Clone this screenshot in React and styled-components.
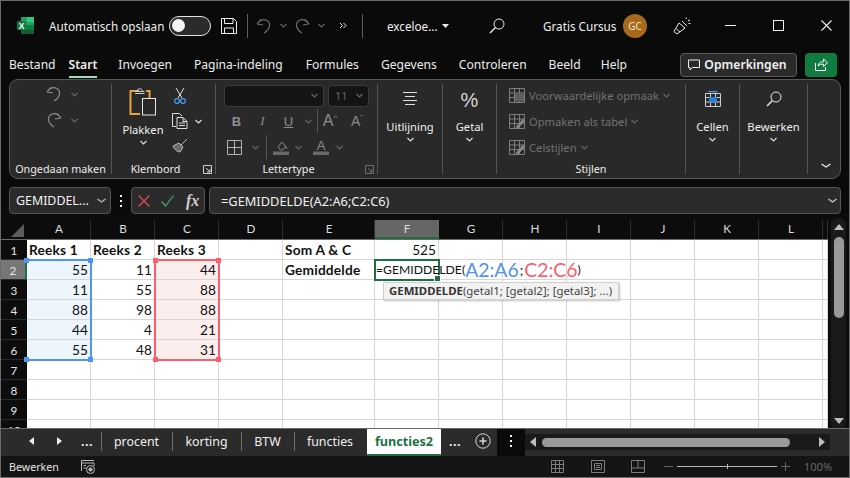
import React from "react";
import styled, { createGlobalStyle } from "styled-components";

const Global = createGlobalStyle`
  html, body { margin: 0; padding: 0; background: #0a0a0a; }
  * { box-sizing: border-box; }
`;
const UI = `"Noto Sans", "Open Sans", sans-serif`;
const CALC = `Lato, "Liberation Sans", sans-serif`;

const Window = styled.div`
  width: 850px; height: 478px; overflow: hidden; background: #0a0a0a;
  border: 1px solid #6b6b6b; display: flex; flex-direction: column;
  font-family: ${UI}; color: #ececec;
`;
const TitleBar = styled.header`display: flex; align-items: center; height: 49px; flex: none;`;
const Slot = styled.div`
  flex: none; width: ${p => p.$w}px; display: flex; align-items: center; justify-content: center;
`;
const TitleText = styled.span`
  flex: none; width: ${p => p.$w}px; font-size: 11.7px; white-space: nowrap; color: #f0f0f0;
`;
const Toggle = styled.div`
  flex: none; width: 42px; height: 20px; border: 1.5px solid #e4e4e4; border-radius: 10px; background: #2b2b2b;
  padding: 2px; display: flex;
`;
const Knob = styled.i`width: 13px; height: 13px; border-radius: 50%; background: #f4f4f4;`;
const TitleSep = styled.i`flex: none; width: 1px; height: 24px; background: #5e5e5e;`;
const Avatar = styled.div`
  flex: none; width: 24px; height: 24px; border-radius: 50%; background: #a76a1b; color: #f1e3cf; font-size: 10px;
  display: flex; align-items: center; justify-content: center;
`;

const TabBar = styled.nav`display: flex; align-items: center; height: 29px; flex: none; padding: 0 12px 0 8px;`;
const Tab = styled.span`
  position: relative; font-size: 12.1px; margin-right: ${p => p.$mr}px; white-space: nowrap; color: #ededed;
  font-weight: ${p => (p.$on ? 600 : 400)};
  ${p => p.$on && `&::after{content:"";position:absolute;left:0;right:0;bottom:-5px;height:2px;background:#a3dcbd;}`}
`;
const TabSpacer = styled.div`flex: 1;`;
const CommentBtn = styled.button`
  width: 117px; height: 24px; border: 1px solid #5d5d5d; border-radius: 4px; background: #2a2a2a; color: #f2f2f2;
  font: 600 12.2px ${UI}; display: flex; align-items: center; justify-content: center; gap: 4px; padding: 0 2px 0 0;
`;
const ShareBtn = styled.button`
  width: 32px; height: 24px; margin-left: 8px; border: none; border-radius: 4px; background: #107c41;
  display: flex; align-items: center; justify-content: center; padding: 0;
`;

const Ribbon = styled.section`
  flex: none; margin: 0 8px; height: 100px; background: #292929; border: 1px solid #585858; border-radius: 9px;
  display: flex; padding: 4px 0; position: relative;
`;
const Group = styled.div`
  flex: none; width: ${p => p.$w}px; border-right: ${p => (p.$last ? "none" : "1px solid #555")};
  display: flex; flex-direction: column; position: relative;
`;
const GroupBody = styled.div`flex: 1; min-height: 0; display: flex; position: relative;`;
const GroupLabel = styled.div`
  height: 15px; flex: none; text-align: center; font-size: 10.8px; line-height: 15px; color: #ececec; white-space: nowrap;
  padding-right: ${p => p.$pr || 0}px; margin-bottom: -2px;
`;
const Launcher = styled.span`position: absolute; right: 3px; bottom: 0; display: flex;`;
const Col = styled.div`
  flex: none; width: ${p => p.$w}px; display: flex; flex-direction: column; align-items: center;
  padding-top: ${p => p.$pt || 0}px;
`;
const BigLabel = styled.div`font-size: 11.2px; line-height: 14px; color: #efefef; white-space: nowrap; margin: ${p => p.$mt || 0}px 0 3px;`;
const SmallRow = styled.div`
  flex: none; display: flex; align-items: center; height: ${p => p.$h || 26}px; padding-left: ${p => p.$pl || 0}px;
  margin-top: ${p => p.$mt || 0}px;
`;
const IconCell = styled.span`flex: none; width: ${p => p.$w}px; display: flex; align-items: center; justify-content: center;`;
const Stack = styled.div`display: flex; flex-direction: column; margin-top: ${p => p.$mt || 0}px;`;
const FontBox = styled.div`
  flex: none; width: ${p => p.$w}px; height: 22px; background: #141414; border: 1px solid #3c3c3c; border-radius: 4px; margin-right: 4px;
  display: flex; align-items: center; justify-content: space-between; padding: 0 5px 0 6px; font-size: 11px; color: #666;
`;
const VRule = styled.i`flex: none; width: 1px; height: 24px; background: #555; margin-left: ${p => p.$ml || 0}px;`;
const Glyph = styled.span`
  font: ${p => p.$f || "700 13px 'Liberation Sans', sans-serif"}; color: ${p => p.$c || "#8e8e8e"};
  text-decoration: ${p => (p.$u ? "underline" : "none")};
`;
const TinyMark = styled.sup`font-size: 8px;`;
const StyleRow = styled.div`
  flex: none; display: flex; align-items: center; height: 26px; padding-left: 12px; gap: 4px;
  font-size: 11.2px; color: #727272; white-space: nowrap;
`;
const CollapseBtn = styled.span`position: absolute; right: 9px; bottom: 10px; display: flex;`;

const FormulaRow = styled.div`display: flex; align-items: stretch; flex: none; height: 27px; margin: 8px 8px 0; `;
const NameBox = styled.div`
  width: 102px; background: #2b2b2b; border: 1px solid #555; border-radius: 4px; flex: none;
  display: flex; align-items: center; justify-content: space-between; padding: 0 4px 0 6px; font-size: 12.4px; color: #f2f2f2; white-space: nowrap;
`;
const Dots = styled.div`flex: none; width: 20px; display: flex; align-items: center; justify-content: center;`;
const FormulaBtns = styled.div`
  flex: none; width: 74px; background: #2b2b2b; border: 1px solid #555; border-radius: 4px; display: flex; align-items: center;
  padding-left: 6px; gap: 11px;
`;
const Fx = styled.span`font: italic 700 16px "Liberation Serif", serif; color: #cfcfcf; margin-left: 1px;`;
const FormulaInput = styled.div`
  flex: 1; margin-left: 4px; background: #2b2b2b; border: 1px solid #555; border-radius: 4px; display: flex; align-items: center;
  justify-content: space-between; padding: 0 3px 0 11px; font-size: 12.8px; color: #f2f2f2;
`;

const SheetWrap = styled.div`flex: none; height: 214px; display: flex; overflow: hidden;`;
const Grid = styled.div`
  flex: none; width: 827px; display: grid; overflow: hidden; background: #fff;
  grid-template-columns: 26px repeat(4, 64px) 92px repeat(7, 64px) 5px;
  grid-template-rows: 26px repeat(10, 20px);
  font-family: ${CALC}; font-size: 13.7px; color: #111;
`;
const Place = styled.div`grid-column: ${p => p.$c}; grid-row: ${p => p.$r};`;
const Corner = styled(Place)`background: #0c0c0c; position: relative; border-bottom: 1px solid #6a6a6a;
  &::after { content: ""; position: absolute; right: 3px; bottom: 2px; border-style: solid; border-width: 0 0 13px 13px; border-color: transparent transparent #5c5c5c transparent; }`;
const ColHead = styled(Place)`
  background: #0c0c0c; border-bottom: 1px solid #6a6a6a; font: 11.7px ${CALC}; color: #dcdcdc; position: relative;
  display: flex; align-items: flex-end; justify-content: center; padding-bottom: 4px;
  &::before { content: ""; position: absolute; left: 0; right: 0; bottom: 0; top: 6px;
    background: ${p => (p.$on ? "#666" : "transparent")};
    border-right: 1px solid ${p => (p.$on ? "#666" : "#2e2e2e")};
    border-bottom: ${p => (p.$on ? "2px solid #1d6f42" : "none")}; }
  & > span { position: relative; }
`;
const RowHead = styled(Place)`
  background: ${p => (p.$on ? "#777" : "#0c0c0c")}; color: #e6e6e6; font: 11.7px ${CALC};
  border-bottom: 1px solid #2a2a2a; border-right: ${p => (p.$on ? "2px solid #1d6f42" : "none")};
  display: flex; align-items: center; justify-content: center;
`;
const Cell = styled(Place)`
  background: ${p => p.$fill || "#fff"}; border-right: 1px solid #d6d6d6; border-bottom: 1px solid #d6d6d6;
  padding: 0 2px; line-height: 20px; white-space: nowrap;
  text-align: ${p => (p.$num ? "right" : "left")}; font-weight: ${p => (p.$b ? 700 : 400)};
  letter-spacing: ${p => (p.$b ? ".2px" : "0")};
`;
const RangeBox = styled(Place)`
  position: relative; z-index: 2; margin: -1px -1px -1px ${p => (p.$flush ? 0 : -1)}px; pointer-events: none;
  border: 2px solid ${p => p.$color}; ${p => p.$flush && "border-left: none;"}
`;
const Handle = styled.i`
  position: absolute; width: 5px; height: 5px; background: ${p => p.$color};
  ${p => (p.$top ? "top: -3px;" : "bottom: -3px;")}
  ${p => (p.$left ? "left: -3px;" : "right: -3px;")}
`;
const ActiveCell = styled(Place)`
  position: relative; z-index: 3; margin: -1px -1px -1px -1px; border: 2px solid #1d6f42; background: #fff;
  white-space: nowrap; display: flex; align-items: center; padding-left: 0; font-size: 12.2px; line-height: 18px; color: #111;
`;
const CornerDot = styled.i`position: absolute; right: -3px; bottom: -3px; width: 5px; height: 5px; background: #1d6f42; border: 1px solid #fff; box-sizing: content-box;`;
const RefPart = styled.span`font-size: 19.4px; color: ${p => p.$c};`;
const RefSep = styled.span`font-size: 13.6px; margin: 0 1px;`;
const Hint = styled.div`
  position: absolute; left: 7px; top: 21px; width: 236px; height: 18px; background: #f2f2f2; border: 1px solid #cfcfcf;
  box-shadow: 1px 1px 2px rgba(0,0,0,.25); font: 11.4px/16px ${UI}; color: #444; padding-left: 5px; white-space: nowrap;
  & b { color: #333; font-weight: 700; }
`;
const VScroll = styled.aside`flex: 1; background: #0c0c0c; display: flex; flex-direction: column; align-items: center; padding-top: 10px; position: relative;`;
const VTrack = styled.div`
  position: absolute; left: 3px; right: 3px; top: 4px; bottom: -2px; background: #1a1a1a; border-radius: 8px;
  display: flex; flex-direction: column; align-items: center; padding-top: 6px;
`;
const VThumb = styled.div`width: 10px; height: 81px; background: #9a9a9a; border-radius: 5px; margin-top: 7px;`;
const VArrow = styled.i`
  width: 0; height: 0; border-left: 5px solid transparent; border-right: 5px solid transparent;
  ${p => (p.$down ? "border-top: 6px solid #bdbdbd; margin-top: auto; margin-bottom: 6px;" : "border-bottom: 6px solid #bdbdbd;")}
`;

const SheetBar = styled.div`
  flex: none; height: 28px; background: #2b2b2b; border-top: 1px solid #6a6a6a; display: flex; align-items: stretch;
  font-size: 12.4px; color: #efefef; padding-left: 22px;
`;
const NavCell = styled.div`
  flex: none; width: ${p => p.$w}px; padding: 0 ${p => p.$pr || 0}px 3px 0; display: flex; align-items: center; justify-content: center; font-weight: 700; letter-spacing: .5px;
`;
const SheetTab = styled.div`
  flex: none; width: ${p => p.$w}px; display: flex; align-items: center; justify-content: center; position: relative; padding-bottom: 3px;
  &::before { content: ""; position: absolute; left: 0; top: 3px; bottom: 5px; width: 1px; background: #6e6e6e; }
`;
const ActiveTab = styled.div`
  flex: none; width: 74px; margin-left: 1px; background: #fff; color: #1a7245; font-weight: 700; border-bottom: 2px solid #1d6f42;
  display: flex; align-items: center; justify-content: center; font-size: 12.6px; padding-bottom: 1px;
`;
const MoreCell = styled.div`flex: none; width: ${p => p.$w}px; padding-bottom: 3px; display: flex; align-items: center; justify-content: center; background: ${p => p.$bg || "transparent"};`;
const HScroll = styled.div`
  flex: none; width: 305px; background: #1a1a1a; margin: 5px 0 6px; display: flex; align-items: center; padding: 0 5px;
`;
const HThumb = styled.div`width: 248px; height: 9px; background: #9a9a9a; border-radius: 5px; margin: 0 auto 0 6px;`;
const HArrow = styled.i`
  width: 0; height: 0; border-top: 5px solid transparent; border-bottom: 5px solid transparent;
  ${p => (p.$right ? "border-left: 6px solid #bdbdbd;" : "border-right: 6px solid #bdbdbd;")}
`;
const StatusBar = styled.footer`flex: 1; background: #141414; display: flex; align-items: center; padding: 0 18px 0 8px; font-size: 10.7px; color: #e4e4e4;`;
const StatusText = styled.span`flex: none; width: 72px;`;
const StatusSpacer = styled.div`flex: 1;`;
const StatusGap = styled.i`flex: none; width: ${p => p.$w}px;`;
const Zoom = styled.div`flex: none; display: flex; align-items: center; width: 167px; color: #666; font-size: 11px; margin-left: 19px;`;
const ZoomBar = styled.div`flex: none; width: 100px; height: 1px; background: #b8b8b8; margin: 0 4px; position: relative;
  &::after { content: ""; position: absolute; left: 50%; top: -2px; width: 1px; height: 5px; background: #b8b8b8; }`;
const ZoomValue = styled.span`margin-left: 14px;`;

const Svg = ({ w = 16, h = 16, vb, children, c = "#e6e6e6", sw = 1 }) => (
  <svg width={w} height={h} viewBox={vb || `0 0 ${w} ${h}`} fill="none" stroke={c} strokeWidth={sw} style={{ display: "block", flex: "none" }}>{children}</svg>
);
const Chev = ({ c = "#dedede", w = 7 }) => (
  <Svg w={w} h={5} c={c} sw={1.2}><path d={`M0.5 1 L${w / 2} 4 L${w - 0.5} 1`} /></Svg>
);
const Undo = ({ c, flip, s = 18 }) => (
  <svg width={s} height={s} viewBox="0 0 18 18" fill="none" stroke={c} strokeWidth="1.2" style={{ transform: flip ? "scaleX(-1)" : "none", display: "block" }}>
    <path d="M2 7 L6 2.5 M2 7 L8 8 M2 7 C5 3 9 2 12 3.5 C16 6 15.5 12 9 16" />
  </svg>
);
const ExcelLogo = () => (
  <svg width="17" height="17" viewBox="0 0 17 17" style={{ display: "block" }}>
    <rect x="4" y="0" width="13" height="17" rx="1" fill="#21a366" />
    <rect x="4" y="8" width="13" height="5" fill="#107c41" />
    <rect x="10" y="0" width="7" height="5" fill="#33c481" />
    <rect x="4" y="13" width="13" height="4" fill="#185c37" />
    <rect x="0" y="4" width="9" height="9" rx="1" fill="#107c41" />
    <text x="4.5" y="11.5" fontSize="8.5" fontWeight="700" fontFamily="Liberation Sans, sans-serif" fill="#fff" textAnchor="middle">X</text>
  </svg>
);
const SaveIcon = () => (
  <Svg w={16} h={16} c="#eee">
    <path d="M.5.5H12.5L15.5 3.5V15.5H.5Z M3.5.5V5.5H12V.5 M3.5 15.5V10H12.5V15.5" />
  </Svg>
);
const SearchIcon = ({ c = "#e8e8e8" }) => (
  <Svg w={16} h={16} vb="0 0 16 16" c={c} sw={1}>
    <circle cx="10" cy="6" r="5" /><path d="M6.5 9.5 L1 15" strokeWidth="1.5" />
  </Svg>
);
const PenIcon = () => (
  <Svg w={18} h={18} c="#eee">
    <path d="M1 14.5 L6 6 L12 11 L4 17 Z M3.5 12 L7 15 M9 4 L14 9 M13 2 L13.5 .5 M15 4 L17 3 M15.5 6.5 L17.5 6.5" />
  </Svg>
);
const Clipboard = () => (
  <Svg w={28} h={31}>
    <path d="M10 4 H1.5 V27 H11" stroke="#e8a33d" strokeWidth="2" />
    <path d="M17 4 H20.5 V11" stroke="#e8a33d" strokeWidth="2" />
    <path d="M6 6.5 H15.5 M8 4 C8.5 1 13 1 13.5 4 M6 4.5 H15.5" stroke="#cfcfcf" />
    <rect x="13.5" y="11.5" width="13" height="16.5" stroke="#e6e6e6" />
  </Svg>
);
const Scissors = () => (
  <Svg w={12} h={18} c="#ddd">
    <path d="M2 1 L8 11 M10 1 L4 11" />
    <circle cx="3" cy="14" r="2.4" stroke="#4a9bf0" strokeWidth="1.2" /><circle cx="9" cy="14" r="2.4" stroke="#4a9bf0" strokeWidth="1.2" />
  </Svg>
);
const CopyIcon = () => (
  <Svg w={16} h={16} c="#ddd">
    <path d="M4 13.5H.5V.5H7.5L10 3 M5 15.5V4.5H11L15 8.5V15.5Z M11 4.5V8.5H15 M7 10H13 M7 12.5H13" />
  </Svg>
);
const BrushIcon = () => (
  <Svg w={16} h={16} c="#b8b8b8">
    <path d="M15 1 L9 7 M7 5 L11 9 L8 14 C5 14 2 11 1 8 Z" fill="#6a6a6a" />
  </Svg>
);
const Launch = ({ c = "#cfcfcf" }) => (
  <Svg w={9} h={9} c={c}><path d="M.5 8.5V.5H8.5V8.5H.5 M3 3 L7 7 M7 4V7H4" /></Svg>
);
const BorderIcon = () => (
  <Svg w={15} h={15} c="#b4b4b4"><path d="M.5.5H14.5V14.5H.5Z M7.5.5V14.5 M.5 7.5H14.5" /></Svg>
);
const FillIcon = () => (
  <Svg w={16} h={16} c="#8e8e8e"><path d="M5 8 L9 3 L13 8 L8 11.5 Z M13 8 L14 10" /><rect x="0" y="12.5" width="16" height="3.5" fill="#6a6a6a" stroke="none" /></Svg>
);
const ColorA = () => (
  <svg width="16" height="16" viewBox="0 0 16 16" style={{ display: "block" }}>
    <text x="8" y="11" textAnchor="middle" fontSize="13" fontFamily="Liberation Sans, sans-serif" fill="#8c8c8c">A</text>
    <rect x="0" y="12.5" width="16" height="3.5" fill="#6a6a6a" />
  </svg>
);
const AlignIcon = () => (
  <Svg w={16} h={14} c="#e0e0e0"><path d="M1 .5H15 M3 4.5H13 M1 8.5H15 M3 12.5H13" /></Svg>
);
const GridStyleIcon = ({ brush }) => (
  <Svg w={16} h={15} c="#7e7e7e">
    <path d="M.5.5H15.5V14.5H.5Z M.5 5H15.5 M.5 9.5H15.5 M5.5.5V14.5 M10.5.5V14.5" />
    {brush ? <path d="M7 13 L14 5 L15.5 7 L9 14Z" fill="#8a8a8a" /> : <rect x="6" y="5.5" width="9" height="8" fill="#5e5e5e" stroke="none" />}
  </Svg>
);
const CellsIcon = () => (
  <Svg w={16} h={16} c="#cfcfcf">
    <path d="M.5 2.5H15.5V15.5H.5Z M.5 6.5H15.5 M.5 11H15.5 M5.5 2.5V15.5 M10.5 2.5V15.5" />
    <rect x="4" y="6" width="8" height="5.5" fill="#2c7fd8" stroke="none" />
    <path d="M3.5 .5H12.5" stroke="#4a9bf0" strokeWidth="1.4" />
  </Svg>
);
const CommentIcon = () => (
  <Svg w={12} h={12} c="#eee"><path d="M.5 1H11.5V8.5H4.5L2 11V8.5H.5Z" /></Svg>
);
const ShareIcon = () => (
  <Svg w={13} h={13} c="#fff"><path d="M.5 5V12.5H10.5V9 M3 8 C3.5 5 6 3.5 8.5 3.5 V1 L12.5 4.8 L8.5 8.5 V6 C6.5 6 4.5 6.5 3 8Z" /></Svg>
);
const PlusCircle = () => (
  <Svg w={16} h={16} c="#d4d4d4"><circle cx="8" cy="8" r="7.2" /><path d="M4.5 8H11.5 M8 4.5V11.5" strokeWidth="1.6" /></Svg>
);
const VDots = () => (
  <Svg w={2} h={12} c="#f0f0f0" sw={2}><path d="M1 0V2 M1 5V7 M1 10V12" /></Svg>
);
const NormalView = () => (
  <Svg w={13} h={13} c="#7d7d7d"><path d="M.5.5H12.5V12.5H.5Z M4.5.5V12.5 M8.5.5V12.5 M.5 4.5H12.5 M.5 8.5H12.5" /></Svg>
);
const PageView = () => (
  <Svg w={14} h={13} c="#7d7d7d"><path d="M.5.5H13.5V12.5H.5Z M3.5 3.5H10.5V9.5H3.5Z M5 5.5H9 M5 7.5H9" /></Svg>
);
const BreakView = () => (
  <Svg w={14} h={13} c="#7d7d7d"><path d="M.5.5H13.5V12.5H.5Z M.5 8H13.5 M7 .5V8" /></Svg>
);
const MacroIcon = () => (
  <Svg w={14} h={14} c="#bdbdbd"><path d="M.5 11V.5H13 M.5 3H13V6 M2.5 5.5H5 M2.5 8H5" /><circle cx="9.5" cy="9.5" r="4" /><circle cx="9.5" cy="9.5" r="1.6" fill="#bdbdbd" /></Svg>
);

const colLetters = ["A", "B", "C", "D", "E", "F", "G", "H", "I", "J", "K", "L"];
const BLUE = "#4f94ef"; const RED = "#ff5d6c";
const data = { 1: ["Reeks 1", "Reeks 2", "Reeks 3"], 2: [55, 11, 44], 3: [11, 55, 88], 4: [88, 98, 88], 5: [44, 4, 21], 6: [55, 48, 31] };

function Sheet() {
  const cells = [];
  for (let r = 1; r <= 10; r++) {
    for (let c = 0; c < 13; c++) {
      if (r === 2 && c === 5) continue;
      let text = null, b = false, num = false, fill;
      if (data[r] && c < 3) { text = data[r][c]; b = r === 1; num = r > 1; }
      if (r > 1 && r < 7 && c === 0) fill = "#edf5fd";
      if (r > 1 && r < 7 && c === 2) fill = "#fdeeee";
      if (c === 4 && r === 1) { text = "Som A & C"; b = true; }
      if (c === 4 && r === 2) { text = "Gemiddelde"; b = true; }
      if (c === 5 && r === 1) { text = 525; num = true; }
      cells.push(<Cell key={`${r}-${c}`} $r={r + 1} $c={c + 2} $b={b} $num={num} $fill={fill}>{text}</Cell>);
    }
  }
  return (
    <Grid>
      <Corner $r={1} $c={1} />
      {colLetters.map((l, i) => <ColHead key={l} $r={1} $c={i + 2} $on={l === "F"}><span>{l}</span></ColHead>)}
      <ColHead $r={1} $c={14} />
      {Array.from({ length: 10 }, (_, i) => <RowHead key={i} $r={i + 2} $c={1} $on={i === 1}>{i + 1}</RowHead>)}
      {cells}
      <RangeBox $r="3 / span 5" $c={2} $color={BLUE} $flush>
        <Handle $color={BLUE} $top /><Handle $color={BLUE} />
        <Handle $color={BLUE} $top $left /><Handle $color={BLUE} $left />
      </RangeBox>
      <RangeBox $r="3 / span 5" $c={4} $color={RED}>
        <Handle $color={RED} $top /><Handle $color={RED} />
        <Handle $color={RED} $top $left /><Handle $color={RED} $left />
      </RangeBox>
      <ActiveCell $r={3} $c={7}>
        =GEMIDDELDE(<RefPart $c={BLUE}>A2:A6</RefPart><RefSep>;</RefSep><RefPart $c={RED}>C2:C6</RefPart>)
        <CornerDot />
        <Hint><b>GEMIDDELDE</b>(getal1; [getal2]; [getal3]; ...)</Hint>
      </ActiveCell>
    </Grid>
  );
}

export default function App() {
  return (
    <>
      <Global />
      <Window>
        <TitleBar>
          <Slot $w={48}><ExcelLogo /></Slot>
          <TitleText $w={120}>Automatisch opslaan</TitleText>
          <Toggle><Knob /></Toggle>
          <Slot $w={36}><SaveIcon /></Slot>
          <TitleSep />
          <Slot $w={32}><Undo c="#6d6d6d" /></Slot>
          <Slot $w={6}><Chev c="#666" /></Slot>
          <Slot $w={32}><Undo c="#6d6d6d" flip /></Slot>
          <Slot $w={6}><Chev c="#666" /></Slot>
          <Slot $w={38}><svg width="8" height="7" viewBox="0 0 8 7" fill="none" stroke="#eee"><path d="M1 1L3.5 3.5L1 6M4.5 1L7 3.5L4.5 6" /></svg></Slot>
          <TitleSep />
          <Slot $w={24} />
          <TitleText $w={52}>exceloe...</TitleText>
          <Slot $w={12}><svg width="7" height="4"><path d="M0 0H7L3.5 4Z" fill="#eee" /></svg></Slot>
          <Slot $w={92}><SearchIcon /></Slot>
          <TitleText $w={80}>Gratis Cursus</TitleText>
          <Avatar>GC</Avatar>
          <Slot $w={70}><PenIcon /></Slot>
          <Slot $w={26}><Svg w={11} h={2} c="#eee"><path d="M0 .5H11" /></Svg></Slot>
          <Slot $w={70}><Svg w={11} h={11} c="#eee"><rect x=".5" y=".5" width="10" height="10" /></Svg></Slot>
          <Slot $w={26}><Svg w={11} h={11} c="#eee" sw={1.1}><path d="M.5.5L10.5 10.5M10.5.5L.5 10.5" /></Svg></Slot>
        </TitleBar>

        <TabBar>
          <Tab $mr={13}>Bestand</Tab>
          <Tab $mr={21} $on>Start</Tab>
          <Tab $mr={22}>Invoegen</Tab>
          <Tab $mr={23}>Pagina-indeling</Tab>
          <Tab $mr={22}>Formules</Tab>
          <Tab $mr={22}>Gegevens</Tab>
          <Tab $mr={22}>Controleren</Tab>
          <Tab $mr={20}>Beeld</Tab>
          <Tab $mr={0}>Help</Tab>
          <TabSpacer />
          <CommentBtn><CommentIcon />Opmerkingen</CommentBtn>
          <ShareBtn><ShareIcon /></ShareBtn>
        </TabBar>

        <Ribbon>
          <Group $w={102}>
            <GroupBody>
              <Stack $mt={-3}>
                <SmallRow $pl={35}><IconCell $w={18}><Undo c="#8a8a8a" /></IconCell><IconCell $w={22}><Chev c="#666" /></IconCell></SmallRow>
                <SmallRow $pl={35}><IconCell $w={18}><Undo c="#8a8a8a" flip /></IconCell><IconCell $w={22}><Chev c="#666" /></IconCell></SmallRow>
              </Stack>
            </GroupBody>
            <GroupLabel>Ongedaan maken</GroupLabel>
          </Group>
          <Group $w={104}>
            <GroupBody>
              <Col $w={62} $pt={3}>
                <Clipboard />
                <BigLabel $mt={5}>Plakken</BigLabel>
                <Chev />
              </Col>
              <Stack>
                <SmallRow $h={24}><IconCell $w={12}><Scissors /></IconCell></SmallRow>
                <SmallRow $h={26}><IconCell $w={12}><CopyIcon /></IconCell><IconCell $w={24}><Chev /></IconCell></SmallRow>
                <SmallRow $h={24}><IconCell $w={12}><BrushIcon /></IconCell></SmallRow>
              </Stack>
            </GroupBody>
            <GroupLabel $pr={16}>Klembord</GroupLabel>
            <Launcher><Launch /></Launcher>
          </Group>
          <Group $w={162}>
            <GroupBody>
              <Stack>
                <SmallRow $h={23} $pl={8}>
                  <FontBox $w={100}><span /><Chev c="#666" /></FontBox>
                  <FontBox $w={41}>11<Chev c="#666" /></FontBox>
                </SmallRow>
                <SmallRow $h={26} $pl={8} $mt={1}>
                  <IconCell $w={25}><Glyph>B</Glyph></IconCell>
                  <IconCell $w={27}><Glyph $f="italic 13px 'Liberation Serif', serif">I</Glyph></IconCell>
                  <IconCell $w={25}><Glyph $f="13px 'Liberation Sans', sans-serif" $u>U</Glyph></IconCell>
                  <IconCell $w={14}><Chev c="#666" /></IconCell>
                  <VRule $ml={2} />
                  <IconCell $w={24}><Glyph $f="16px 'Liberation Sans', sans-serif">A<TinyMark>^</TinyMark></Glyph></IconCell>
                  <IconCell $w={30}><Glyph $f="14px 'Liberation Sans', sans-serif">A<TinyMark>ˇ</TinyMark></Glyph></IconCell>
                </SmallRow>
                <SmallRow $h={26} $pl={8}>
                  <IconCell $w={20}><BorderIcon /></IconCell>
                  <IconCell $w={22}><Chev c="#666" /></IconCell>
                  <VRule />
                  <IconCell $w={28}><FillIcon /></IconCell>
                  <IconCell $w={6}><Chev c="#666" /></IconCell>
                  <IconCell $w={12} />
                  <IconCell $w={16}><ColorA /></IconCell>
                  <IconCell $w={20}><Chev c="#666" /></IconCell>
                </SmallRow>
              </Stack>
            </GroupBody>
            <GroupLabel $pr={16}>Lettertype</GroupLabel>
            <Launcher><Launch c="#6a6a6a" /></Launcher>
          </Group>
          <Group $w={65}>
            <GroupBody>
              <Col $w={64} $pt={8}>
                <AlignIcon />
                <BigLabel $mt={14}>Uitlijning</BigLabel>
                <Chev />
              </Col>
            </GroupBody>
          </Group>
          <Group $w={54}>
            <GroupBody>
              <Col $w={53} $pt={5}>
                <Glyph $f="20px/22px 'Liberation Sans', sans-serif" $c="#d8d8d8">%</Glyph>
                <BigLabel $mt={9}>Getal</BigLabel>
                <Chev />
              </Col>
            </GroupBody>
          </Group>
          <Group $w={189}>
            <GroupBody>
              <Stack $mt={-2}>
                <StyleRow><GridStyleIcon />Voorwaardelijke opmaak<Chev c="#666" /></StyleRow>
                <StyleRow><GridStyleIcon brush />Opmaken als tabel<Chev c="#666" /></StyleRow>
                <StyleRow><GridStyleIcon brush />Celstijlen<Chev c="#666" /></StyleRow>
              </Stack>
            </GroupBody>
            <GroupLabel>Stijlen</GroupLabel>
          </Group>
          <Group $w={54}>
            <GroupBody>
              <Col $w={53} $pt={7}>
                <CellsIcon />
                <BigLabel $mt={13}>Cellen</BigLabel>
                <Chev />
              </Col>
            </GroupBody>
          </Group>
          <Group $w={68}>
            <GroupBody>
              <Col $w={67} $pt={7}>
                <SearchIcon />
                <BigLabel $mt={13}>Bewerken</BigLabel>
                <Chev />
              </Col>
            </GroupBody>
          </Group>
          <CollapseBtn><Chev w={10} c="#eee" /></CollapseBtn>
        </Ribbon>

        <FormulaRow>
          <NameBox>GEMIDDEL...<Chev w={9} c="#bbb" /></NameBox>
          <Dots><VDots /></Dots>
          <FormulaBtns>
            <Svg w={12} h={12} c="#e8505b" sw={1.1}><path d="M.5.5L11.5 11.5M11.5.5L.5 11.5" /></Svg>
            <Svg w={13} h={12} c="#3fae6a" sw={1.2}><path d="M.5 6.5L4.5 11L12.5 .5" /></Svg>
            <Fx>fx</Fx>
          </FormulaBtns>
          <FormulaInput>=GEMIDDELDE(A2:A6;C2:C6)<Chev w={9} c="#ccc" /></FormulaInput>
        </FormulaRow>

        <SheetWrap>
          <Sheet />
          <VScroll>
            <VTrack>
              <VArrow />
              <VThumb />
              <VArrow $down />
            </VTrack>
          </VScroll>
        </SheetWrap>

        <SheetBar>
          <MoreCell $w={16}><svg width="5" height="8"><path d="M5 0V8L0 4Z" fill="#eee" /></svg></MoreCell>
          <MoreCell $w={40}><svg width="5" height="8"><path d="M0 0V8L5 4Z" fill="#eee" /></svg></MoreCell>
          <NavCell $w={22} $pr={6}>...</NavCell>
          <SheetTab $w={71}>procent</SheetTab>
          <SheetTab $w={69}>korting</SheetTab>
          <SheetTab $w={53}>BTW</SheetTab>
          <SheetTab $w={72}>functies</SheetTab>
          <ActiveTab>functies2</ActiveTab>
          <NavCell $w={28}>...</NavCell>
          <MoreCell $w={28}><PlusCircle /></MoreCell>
          <MoreCell $w={28} $bg="#0a0a0a"><VDots /></MoreCell>
          <HScroll>
            <HArrow />
            <HThumb />
            <HArrow $right />
          </HScroll>
        </SheetBar>

        <StatusBar>
          <StatusText>Bewerken</StatusText>
          <MacroIcon />
          <StatusSpacer />
          <NormalView />
          <StatusGap $w={27} />
          <PageView />
          <StatusGap $w={26} />
          <BreakView />
          <Zoom>
            <Svg w={9} h={2} c="#666"><path d="M0 .5H9" /></Svg>
            <ZoomBar />
            <Svg w={9} h={9} c="#666"><path d="M0 4.5H9M4.5 0V9" /></Svg>
            <ZoomValue>100%</ZoomValue>
          </Zoom>
        </StatusBar>
      </Window>
    </>
  );
}
